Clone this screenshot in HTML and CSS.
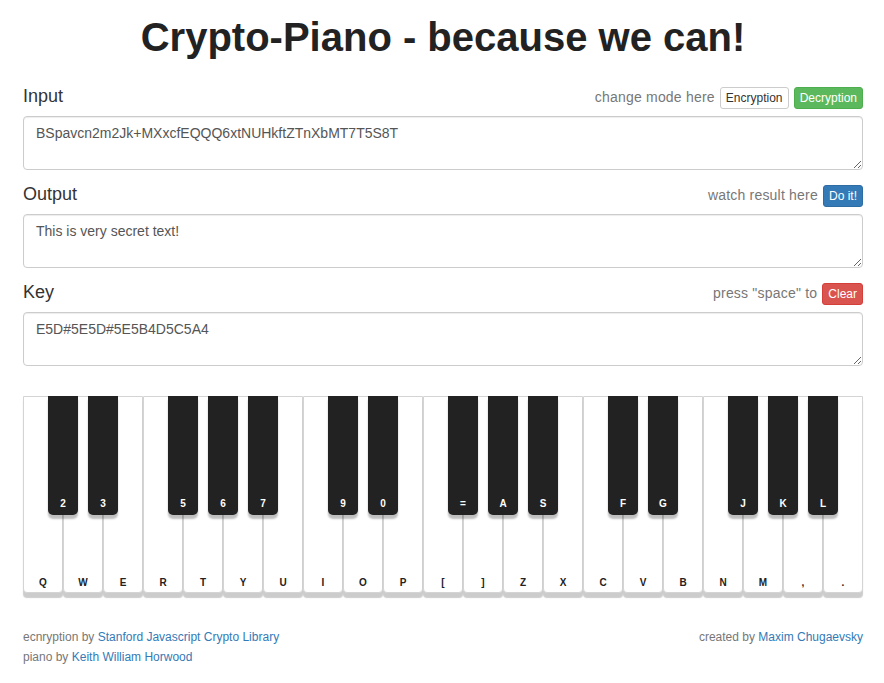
FILE: index.html
```html
<!DOCTYPE html>
<html>
<head>
<meta charset="utf-8">
<title>Crypto-Piano</title>
<link rel="stylesheet" href="styles.css">
</head>
<body>
<div class="page">
  <h1 class="title">Crypto-Piano - because we can!</h1>

  <div class="row-head">
    <span class="label">Input</span>
    <span class="hint">change mode here <button class="btn btn-default">Encryption</button> <button class="btn btn-success">Decryption</button></span>
  </div>
  <textarea class="field" rows="2">BSpavcn2m2Jk+MXxcfEQQQ6xtNUHkftZTnXbMT7T5S8T</textarea>

  <div class="row-head">
    <span class="label">Output</span>
    <span class="hint">watch result here <button class="btn btn-primary">Do it!</button></span>
  </div>
  <textarea class="field" rows="2">This is very secret text!</textarea>

  <div class="row-head">
    <span class="label">Key</span>
    <span class="hint">press "space" to <button class="btn btn-danger">Clear</button></span>
  </div>
  <textarea class="field" rows="2">E5D#5E5D#5E5B4D5C5A4</textarea>

  <div class="piano">
    <div class="wkey"><span class="wlabel">Q</span><div class="bkey"><span class="blabel">2</span></div></div>
    <div class="wkey"><span class="wlabel">W</span><div class="bkey"><span class="blabel">3</span></div></div>
    <div class="wkey"><span class="wlabel">E</span></div>
    <div class="wkey"><span class="wlabel">R</span><div class="bkey"><span class="blabel">5</span></div></div>
    <div class="wkey"><span class="wlabel">T</span><div class="bkey"><span class="blabel">6</span></div></div>
    <div class="wkey"><span class="wlabel">Y</span><div class="bkey"><span class="blabel">7</span></div></div>
    <div class="wkey"><span class="wlabel">U</span></div>
    <div class="wkey"><span class="wlabel">I</span><div class="bkey"><span class="blabel">9</span></div></div>
    <div class="wkey"><span class="wlabel">O</span><div class="bkey"><span class="blabel">0</span></div></div>
    <div class="wkey"><span class="wlabel">P</span></div>
    <div class="wkey"><span class="wlabel">[</span><div class="bkey"><span class="blabel">=</span></div></div>
    <div class="wkey"><span class="wlabel">]</span><div class="bkey"><span class="blabel">A</span></div></div>
    <div class="wkey"><span class="wlabel">Z</span><div class="bkey"><span class="blabel">S</span></div></div>
    <div class="wkey"><span class="wlabel">X</span></div>
    <div class="wkey"><span class="wlabel">C</span><div class="bkey"><span class="blabel">F</span></div></div>
    <div class="wkey"><span class="wlabel">V</span><div class="bkey"><span class="blabel">G</span></div></div>
    <div class="wkey"><span class="wlabel">B</span></div>
    <div class="wkey"><span class="wlabel">N</span><div class="bkey"><span class="blabel">J</span></div></div>
    <div class="wkey"><span class="wlabel">M</span><div class="bkey"><span class="blabel">K</span></div></div>
    <div class="wkey"><span class="wlabel">,</span><div class="bkey"><span class="blabel">L</span></div></div>
    <div class="wkey"><span class="wlabel">.</span></div>
  </div>

  <footer class="foot">
    <div class="foot-left">
      <div>ecnryption by <a href="#">Stanford Javascript Crypto Library</a></div>
      <div>piano by <a href="#">Keith William Horwood</a></div>
    </div>
    <div class="foot-right">created by <a href="#">Maxim Chugaevsky</a></div>
  </footer>
</div>
</body>
</html>
```

FILE: styles.css
```css
html, body {
  margin: 0;
  padding: 0;
  background: #fff;
}

body {
  font-family: "Liberation Sans", Arial, Helvetica, sans-serif;
  font-size: 14px;
  line-height: 1.42857;
  color: #333;
}

.page {
  width: 840px;
  margin: 0 0 0 23px;
}

.title {
  margin: 15px 0 0;
  font-size: 40px;
  line-height: 44px;
  font-weight: bold;
  color: #222;
  text-align: center;
}

.row-head {
  display: flex;
  justify-content: space-between;
  align-items: baseline;
  height: 22px;
  margin-top: 15px;
}

.title + .row-head {
  margin-top: 28px;
}

.label {
  font-size: 18px;
  line-height: 18px;
  color: #333;
}

.hint {
  font-size: 14px;
  line-height: 20px;
  color: #777;
  letter-spacing: 0.2px;
}

.btn {
  display: inline-block;
  font-family: "Liberation Sans", Arial, sans-serif;
  font-size: 12px;
  line-height: 18px;
  letter-spacing: 0;
  padding: 1px 5px;
  border: 1px solid transparent;
  border-radius: 3px;
  margin: 0 0 0 1px;
  cursor: pointer;
  vertical-align: baseline;
}

.btn-default {
  background: #fff;
  border-color: #ccc;
  color: #333;
}

.btn-success {
  background: #5cb85c;
  border-color: #4cae4c;
  color: #fff;
}

.btn-primary {
  background: #337ab7;
  border-color: #2e6da4;
  color: #fff;
}

.btn-danger {
  background: #d9534f;
  border-color: #d43f3a;
  color: #fff;
}

.field {
  display: block;
  box-sizing: border-box;
  width: 100%;
  height: 54px;
  margin: 7px 0 0;
  padding: 6px 12px;
  font-family: "Liberation Sans", Arial, sans-serif;
  font-size: 14px;
  line-height: 20px;
  color: #555;
  background: #fff;
  border: 1px solid #ccc;
  border-radius: 4px;
  box-shadow: inset 0 1px 1px rgba(0, 0, 0, 0.075);
  resize: vertical;
}

.piano {
  display: flex;
  margin-top: 30px;
}

.wkey {
  position: relative;
  box-sizing: border-box;
  width: 40px;
  height: 197px;
  background: #fff;
  border: 1px solid #d4d4d4;
  border-radius: 0 0 4px 4px;
  box-shadow: 0 5px 1px rgba(0, 0, 0, 0.2);
  display: flex;
  align-items: flex-end;
  justify-content: center;
}

.wlabel {
  font-size: 10px;
  line-height: 10px;
  font-weight: bold;
  color: #222;
  margin-bottom: 4px;
}

.bkey {
  position: absolute;
  top: -1px;
  right: -16px;
  z-index: 2;
  width: 30px;
  height: 119px;
  background: #222;
  border-radius: 0 0 5px 5px;
  box-shadow: 0 4px 2px rgba(0, 0, 0, 0.25);
  display: flex;
  align-items: flex-end;
  justify-content: center;
}

.blabel {
  font-size: 10px;
  line-height: 10px;
  font-weight: bold;
  color: #fff;
  margin-bottom: 6px;
}

.foot {
  display: flex;
  justify-content: space-between;
  align-items: flex-start;
  margin-top: 34px;
  font-size: 12px;
  line-height: 20px;
  color: #777;
}

.foot a {
  color: #337ab7;
  text-decoration: none;
}
```
